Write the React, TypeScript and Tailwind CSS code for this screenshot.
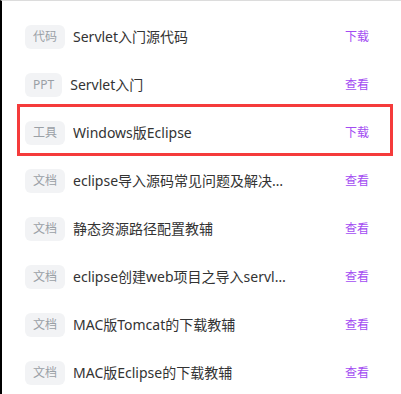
import React from "react";

const items: { tag: string; title: string; action: string; active?: boolean }[] = [
  { tag: "代码", title: "Servlet入门源代码", action: "下载" },
  { tag: "PPT", title: "Servlet入门", action: "查看" },
  { tag: "工具", title: "Windows版Eclipse", action: "下载", active: true },
  { tag: "文档", title: "eclipse导入源码常见问题及解决方案", action: "查看" },
  { tag: "文档", title: "静态资源路径配置教辅", action: "查看" },
  { tag: "文档", title: "eclipse创建web项目之导入servlet-api.jar", action: "查看" },
  { tag: "文档", title: "MAC版Tomcat的下载教辅", action: "查看" },
  { tag: "文档", title: "MAC版Eclipse的下载教辅", action: "查看" },
];

export default function App() {
  return (
    <div
      className="w-[401px] h-[394px] overflow-hidden bg-white border-l-2 border-l-black border-t border-t-[#dcdcdc]"
      style={{ fontFamily: '"Noto Sans", "Noto Sans CJK SC", sans-serif' }}
    >
      <ul className="pt-[12px] pl-[23px] pr-[32px]">
        {items.map((it, i) => (
          <li key={i} className="relative h-[48px] flex items-center">
            {it.active && (
              <span className="absolute -top-[5px] bottom-[1px] -left-[8px] -right-[24px] border-[3px] border-[#f53b3b] pointer-events-none" />
            )}
            <span className="h-[24px] px-[8px] rounded-[6px] bg-[#f2f3f5] text-[#9aa0a6] text-[12px] leading-[24px] shrink-0">
              {it.tag}
            </span>
            <span className="ml-[8px] w-[220px] truncate text-[14px] leading-[20px] text-[#333333]">
              {it.title}
            </span>
            <span className="ml-auto text-[12px] leading-[20px] text-[#a34cf2]">{it.action}</span>
          </li>
        ))}
      </ul>
    </div>
  );
}
